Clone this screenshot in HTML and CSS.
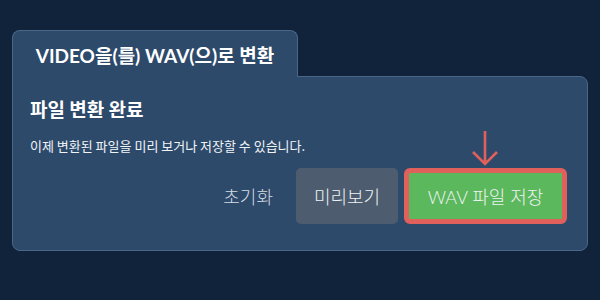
FILE: index.html
```html
<!DOCTYPE html>
<html>
<head>
  <title>VIDEO to WAV</title>
  <link rel="stylesheet" href="styles.css">
</head>
<body>
  <div class="panel">
    <div class="tab">VIDEO을(를) WAV(으)로 변환</div>
    <div class="card">
      <h1 class="title">파일 변환 완료</h1>
      <p class="desc">이제 변환된 파일을 미리 보거나 저장할 수 있습니다.</p>
      <div class="actions">
        <button class="btn-reset">초기화</button>
        <button class="btn-preview">미리보기</button>
        <div class="save-wrap">
          <svg class="arrow" width="30" height="36" viewBox="0 0 30 36">
            <path d="M15 1 L15 34 M3 22 L15 34 L27 22" fill="none" stroke="#e0605c" stroke-width="2.6"/>
          </svg>
          <button class="btn-save">WAV 파일 저장</button>
        </div>
      </div>
    </div>
  </div>
</body>
</html>
```

FILE: styles.css
```css
* {
  margin: 0;
  padding: 0;
  box-sizing: border-box;
}
html,
body {
  height: 100%;
  background: #11233a;
  font-family: Lato, "Noto Sans CJK KR", "Noto Sans", sans-serif;
  color: #ffffff;
}
body {
  padding: 30px 12px 0 12px;
}
.panel {
  display: flex;
  flex-direction: column;
  align-items: flex-start;
}
.tab {
  height: 47px;
  width: 286px;
  display: flex;
  align-items: center;
  justify-content: center;
  background: #2d4a6b;
  border: 1px solid #4a6688;
  border-bottom: none;
  border-radius: 8px 8px 0 0;
  font-size: 19px;
  font-weight: 700;
  position: relative;
  z-index: 1;
  margin-bottom: -1px;
}
.card {
  width: 576px;
  height: 175px;
  background: #2d4a6b;
  border: 1px solid #4a6688;
  border-radius: 0 8px 8px 8px;
  padding: 17px 20px 20px 17px;
}
.title {
  font-family: "Noto Sans CJK KR", sans-serif;
  font-size: 19px;
  font-weight: 700;
  line-height: 30px;
}
.desc {
  font-family: "Noto Sans CJK KR", sans-serif;
  font-size: 13px;
  line-height: 20px;
  margin-top: 12px;
  color: #f2f5f8;
}
.actions {
  display: flex;
  justify-content: flex-end;
  align-items: center;
  margin-top: 12px;
}
button {
  font-family: Lato, "Noto Sans CJK KR", sans-serif;
  font-size: 18px;
  font-weight: 300;
  border: none;
  color: #eef2f5;
  height: 56px;
}
.btn-reset {
  background: transparent;
  color: #d4dce4;
  font-size: 18px;
  margin-right: 23px;
}
.btn-preview {
  width: 102px;
  background: #4d5d6f;
  border-radius: 5px;
  margin-right: 6px;
}
.save-wrap {
  position: relative;
}
.btn-save {
  display: block;
  width: 163px;
  background: #5cb85c;
  border: 5px solid #e0605c;
  border-radius: 6px;
}
.arrow {
  position: absolute;
  left: 66px;
  bottom: 100%;
  margin-bottom: 2px;
}
```
